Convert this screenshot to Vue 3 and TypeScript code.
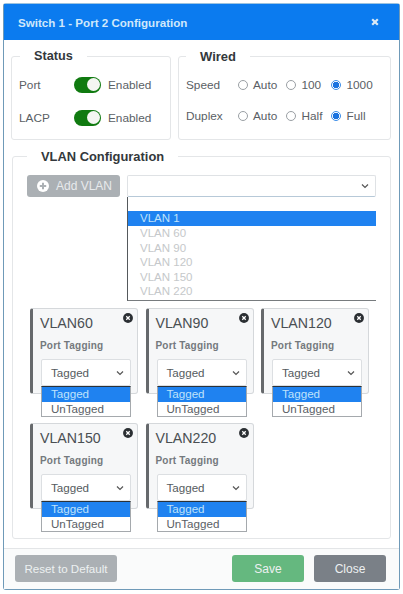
<script setup lang="ts">
interface Choice { label: string; on: boolean }
const speed: Choice[] = [{ label: 'Auto', on: false }, { label: '100', on: false }, { label: '1000', on: true }]
const duplex: Choice[] = [{ label: 'Auto', on: false }, { label: 'Half', on: false }, { label: 'Full', on: true }]
const vlanOptions = ['VLAN 1', 'VLAN 60', 'VLAN 90', 'VLAN 120', 'VLAN 150', 'VLAN 220']
const cards = ['VLAN60', 'VLAN90', 'VLAN120', 'VLAN150', 'VLAN220']
</script>

<template>
  <div class="page">
    <div class="modal">
      <header class="head">
        <span class="title">Switch 1 - Port 2 Configuration</span>
        <svg class="x" width="8" height="8" viewBox="0 0 8 8"><path d="M1.2 1.2l5.6 5.6M6.8 1.2L1.2 6.8" stroke="#dbe9f5" stroke-width="2.2"/></svg>
      </header>
      <div class="body">
        <div class="top">
          <fieldset class="box status">
            <legend>Status</legend>
            <div class="srow"><span class="lab">Port</span><span class="toggle"><i></i></span><span>Enabled</span></div>
            <div class="srow"><span class="lab">LACP</span><span class="toggle"><i></i></span><span>Enabled</span></div>
          </fieldset>
          <fieldset class="box wired">
            <legend>Wired</legend>
            <div class="wrow">
              <span class="wlab">Speed</span>
              <span v-for="c in speed" :key="c.label" class="choice"><span class="radio" :class="{ on: c.on }"></span>{{ c.label }}</span>
            </div>
            <div class="wrow">
              <span class="wlab">Duplex</span>
              <span v-for="c in duplex" :key="c.label" class="choice"><span class="radio" :class="{ on: c.on }"></span>{{ c.label }}</span>
            </div>
          </fieldset>
        </div>
        <fieldset class="box vlan">
          <legend>VLAN Configuration</legend>
          <div class="addrow">
            <button class="add">
              <svg width="14" height="14" viewBox="0 0 14 14"><circle cx="7" cy="7" r="6" fill="#fff"/><path d="M7 3.8v6.4M3.8 7h6.4" stroke="#abb0b4" stroke-width="2"/></svg>
              Add VLAN
            </button>
            <div class="pick">
              <div class="sel wide"><svg class="chev" width="8" height="6" viewBox="0 0 8 6"><path d="M1 1.5l3 3 3-3" fill="none" stroke="#555" stroke-width="1.2"/></svg></div>
              <ul class="list">
                <li class="blank"></li>
                <li v-for="(o, i) in vlanOptions" :key="o" :class="{ act: i === 0 }">{{ o }}</li>
              </ul>
            </div>
          </div>
          <div class="cards">
            <div v-for="c in cards" :key="c" class="card">
              <div class="cname">{{ c }}</div>
              <svg class="close" width="10" height="10" viewBox="0 0 11 11"><circle cx="5.5" cy="5.5" r="5.4" fill="#2b2f33"/><path d="M3.6 3.6l3.8 3.8M7.4 3.6l-3.8 3.8" stroke="#fff" stroke-width="1.4"/></svg>
              <div class="ptag">Port Tagging</div>
              <div class="tagsel">
                <div class="sel small">Tagged<svg class="chev" width="8" height="6" viewBox="0 0 8 6"><path d="M1 1.5l3 3 3-3" fill="none" stroke="#555" stroke-width="1.2"/></svg></div>
                <ul class="tlist"><li class="act">Tagged</li><li>UnTagged</li></ul>
              </div>
            </div>
          </div>
        </fieldset>
      </div>
      <footer class="foot">
        <button class="btn reset">Reset to Default</button>
        <span class="spacer"></span>
        <button class="btn save">Save</button>
        <button class="btn closeb">Close</button>
      </footer>
    </div>
  </div>
</template>

<style scoped>
.page { width: 403px; height: 594px; padding: 3px 3px 4px 3px; box-sizing: border-box; background: #fff; font-family: "Liberation Sans", Arial, sans-serif; color: #555b60; font-size: 11.8px; }
.modal { height: 587px; box-sizing: border-box; border: 1px solid #6f9ab8; border-top-color: #9cc3e0; border-radius: 3px; display: flex; flex-direction: column; background: #fff; }
.head { height: 36px; flex: none; background: #0b7bef; display: flex; align-items: center; justify-content: space-between; padding: 0 20px 0 14px; color: #cfe8fb; font-weight: 700; font-size: 11.6px; }
.body { flex: 1; padding: 9px 7px 0 7px; display: flex; flex-direction: column; gap: 9px; }
.top { display: flex; gap: 7px; }
.box { margin: 0; border: 1px solid #e4e6e8; border-radius: 3px; box-sizing: border-box; min-width: 0; }
legend { font-weight: 700; color: #33383c; font-size: 12.7px; line-height: 15px; }
.status { width: 160px; height: 91px; padding: 4px 8px 0 7px; }
.status legend { margin-left: 1px; padding: 0 14px; }
.wired { width: 213px; height: 91px; padding: 5px 8px 0 7px; }
.wired legend { margin-left: 0; padding: 0 14px; font-size: 13px; }
.srow { display: flex; align-items: center; height: 33px; color: #5a6065; }
.lab { width: 55px; }
.toggle { width: 27px; height: 16px; background: #107a10; border-radius: 8px; margin-right: 7px; position: relative; }
.toggle i { position: absolute; right: 1.5px; top: 1.5px; width: 13px; height: 13px; border-radius: 50%; background: #f4f6f2; }
.wrow { display: grid; grid-template-columns: 51.5px 48.5px 45px auto; align-items: center; height: 31.5px; color: #5a6065; font-size: 11.8px; }
.choice { display: flex; align-items: center; }
.radio { width: 8px; height: 8px; border: 1px solid #9a9fa4; border-radius: 50%; margin-right: 5.5px; background: #fff; box-sizing: content-box; flex: none; }
.radio.on { border-color: #3a8ce8; background: radial-gradient(circle, #1a73e0 0 3px, #fff 3.5px); }
.vlan { width: 379px; height: 390px; margin-left: 1px; padding: 11px 14px 0 14px; }
.vlan legend { margin-left: 0; padding: 0 14px; font-size: 12.9px; }
.addrow { display: flex; align-items: flex-start; gap: 8px; }
.add { width: 93px; height: 22px; flex: none; border: 0; border-radius: 3px; background: #abb0b4; color: #e8eaec; font: 12px "Liberation Sans", Arial, sans-serif; display: flex; align-items: center; gap: 6px; padding: 0 0 0 9px; }
.pick { width: 249px; margin-left: -1px; }
.sel { display: flex; align-items: center; position: relative; box-sizing: border-box; background: #fff; border: 1px solid #dfe2e5; border-radius: 2px; }
.wide { height: 22px; border-bottom-color: #b7c9d8; }
.chev { position: absolute; right: 6px; top: 50%; margin-top: -3px; }
.list { list-style: none; margin: 0; padding: 0; border-left: 1px solid #55595c; border-bottom: 1px solid #777b7e; height: 104px; box-sizing: border-box; color: #c5c8ca; font-size: 11.5px; }
.list li { height: 14.6px; line-height: 14.6px; padding-left: 12px; }
.list .blank { height: 14px; }
.list .act { background: #1f82f0; color: #bfe2fb; height: 15px; }
.cards { display: grid; grid-template-columns: repeat(3, 108px); column-gap: 7.5px; row-gap: 29px; margin: 7px 0 0 3px; width: 340px; }
.card { position: relative; height: 86px; box-sizing: border-box; background: #f6f7f8; border: 1px solid #d5d8db; border-left: 3px solid #66696c; border-radius: 3px; padding: 5px 0 0 7px; }
.cname { font-size: 14.2px; line-height: 18px; color: #4a4f53; }
.close { position: absolute; right: 4px; top: 4px; }
.ptag { font-size: 10px; font-weight: 700; color: #74797d; margin-top: 7px; line-height: 13px; letter-spacing: .2px; }
.tagsel { position: absolute; left: 8px; top: 50px; width: 90px; }
.small { height: 27px; padding-left: 9px; font-size: 11.6px; color: #555b60; border-color: #dcdfe2; }
.tlist { list-style: none; margin: 0; padding: 0; border: 1px solid #a5a9ad; border-top: 1px solid #2b3238; background: #fff; font-size: 11.6px; color: #5a6065; box-sizing: border-box; height: 31px; }
.tlist li { height: 14.5px; line-height: 14.5px; padding-left: 9px; }
.tlist .act { background: #1f82f0; color: #bfe2fb; }
.foot { margin-top: auto; height: 41px; flex: none; box-sizing: border-box; border-top: 1px solid #e3e5e7; background: #fafbfb; display: flex; align-items: flex-start; padding: 6px 13px 0 11px; gap: 10px; }
.spacer { flex: 1; }
.btn { height: 27px; border: 0; border-radius: 3px; font: 12px "Liberation Sans", Arial, sans-serif; color: #edf0f1; padding: 0; }
.reset { width: 102px; background: #abb0b4; font-size: 11.6px; }
.save { width: 72px; background: #65b87f; }
.closeb { width: 72px; background: #7a8087; }
</style>
